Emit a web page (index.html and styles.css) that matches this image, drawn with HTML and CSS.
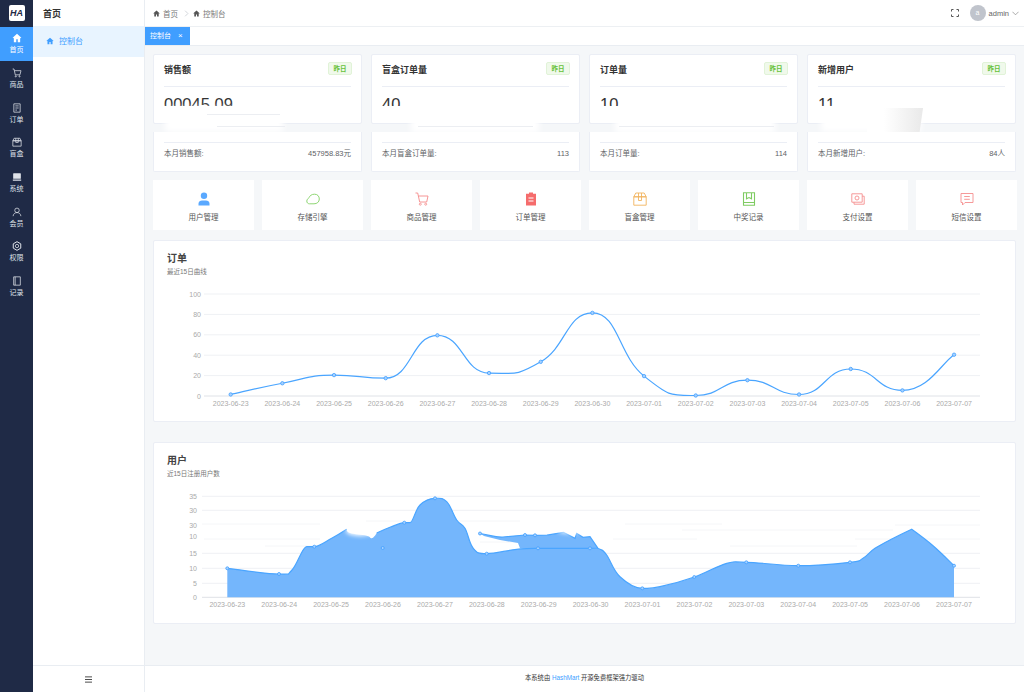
FILE: index.html
```html
<!DOCTYPE html>
<html lang="zh">
<head>
	<meta charset="utf-8">
	<title>控制台</title>
	<link rel="stylesheet" href="styles.css">
</head>
<body>
	<aside class="rail">
		<div class="logo"><span class="logoMark">HA</span></div>
		<a class="railItem active">
			<svg class="railIcon" viewBox="0 0 12 12"><path fill="currentColor" d="M6 1 .8 5.6l.7.7.7-.6V11h2.900V7.600h1.800V11h2.900V5.700l.7.6.7-.7z"/></svg>
			<span>首页</span>
		</a>
		<a class="railItem">
			<svg class="railIcon" viewBox="0 0 12 12"><path class="line" d="M.8 1.200h1.600l1.500 7h5.600L10.800 3.200H2.900"/><circle class="line" cx="4.500" cy="10" r=".7"/><circle class="line" cx="9" cy="10" r=".7"/></svg>
			<span>商品</span>
		</a>
		<a class="railItem">
			<svg class="railIcon" viewBox="0 0 12 12"><path class="line" d="M2.200 1h7.600v10H2.200zM4 3.500h4M4 6h4M4 8.500h2"/></svg>
			<span>订单</span>
		</a>
		<a class="railItem">
			<svg class="railIcon" viewBox="0 0 12 12"><path class="line" d="M1 4.500h10V11H1zM2.500 1.500h7L11 4.500H1zM4.500 1.500v5h3v-5"/></svg>
			<span>盲盒</span>
		</a>
		<a class="railItem">
			<svg class="railIcon" viewBox="0 0 12 12"><path fill="currentColor" d="M2 1.500h8a.6.6 0 0 1 .6.6V8H1.400V2.100a.6.6 0 0 1 .6-.6zM1 9h10v1.500H1z"/></svg>
			<span>系统</span>
		</a>
		<a class="railItem">
			<svg class="railIcon" viewBox="0 0 12 12"><circle class="line" cx="6" cy="4" r="2.700"/><path class="line" d="M1.300 11c.3-2.700 2.200-4.300 4.700-4.300s4.400 1.600 4.700 4.300"/></svg>
			<span>会员</span>
		</a>
		<a class="railItem">
			<svg class="railIcon" viewBox="0 0 12 12"><path class="line round" d="M6 .8 10.500 3.400v5.200L6 11.200 1.500 8.600V3.400z"/><circle class="line" cx="6" cy="6" r="2"/></svg>
			<span>权限</span>
		</a>
		<a class="railItem">
			<svg class="railIcon" viewBox="0 0 12 12"><path class="line" d="M2 1h8v10H2zM3.800 1v10"/></svg>
			<span>记录</span>
		</a>
	</aside>

	<nav class="subMenu">
		<div class="subTitle">首页</div>
		<a class="subItem">
			<svg class="subIcon" viewBox="0 0 12 12"><path fill="currentColor" d="M6 1 .8 5.600l.7.700.7-.6V11h2.900V7.600h1.800V11h2.900V5.700l.7.600.7-.7z"/></svg>
			控制台
		</a>
		<div class="subFooter">
			<svg class="menuIcon" viewBox="0 0 8 7"><path d="M0 .5h8M0 3.500h8M0 6.500h8" stroke="#333" fill="none"/></svg>
		</div>
	</nav>

	<div class="main">
		<header class="topBar">
			<div class="crumbs">
				<svg class="crumbIcon" viewBox="0 0 12 12"><path fill="currentColor" d="M6 1 .8 5.600l.7.700.7-.6V11h2.900V7.600h1.800V11h2.900V5.700l.7.600.7-.7z"/></svg>
				<span>首页</span>
				<svg class="crumbSep" viewBox="0 0 6 10"><path d="M1 1l4 4-4 4" fill="none" stroke="#c0c4cc" stroke-width="1"/></svg>
				<svg class="crumbIcon" viewBox="0 0 12 12"><path fill="currentColor" d="M6 1 .8 5.600l.7.700.7-.6V11h2.900V7.600h1.800V11h2.900V5.700l.7.600.7-.7z"/></svg>
				<span>控制台</span>
			</div>
			<div class="userBox">
				<svg class="fullIcon" viewBox="0 0 8 8"><path d="M.5 2.500v-2h2M5.500.5h2v2M7.500 5.500v2h-2M2.500 7.500h-2v-2" fill="none" stroke="#555" stroke-width="1"/></svg>
				<span class="avatar">a</span>
				<span class="userName">admin</span>
				<svg class="chevron" viewBox="0 0 8 5"><path d="M.5.5 4 4 7.500.5" fill="none" stroke="#888" stroke-width=".8"/></svg>
			</div>
		</header>

		<div class="tabBar">
			<div class="tab">控制台<span class="tabClose">×</span></div>
		</div>

		<div class="content">
			<section class="statGrid">
				<div class="stat">
					<div class="statTop">
						<div class="statHead"><h3>销售额</h3><span class="tag">昨日</span></div>
						<div class="statNum">00045.09</div>
					</div>
					<div class="statBottom"><div class="statRow"><span>本月销售额:</span><span>457958.83元</span></div></div>
					<div class="numCover"></div>
					<div class="smear smearA"></div>
					<div class="streak streakA"></div>
					<div class="streak streakA2"></div>
				</div>
				<div class="stat">
					<div class="statTop">
						<div class="statHead"><h3>盲盒订单量</h3><span class="tag">昨日</span></div>
						<div class="statNum">40</div>
					</div>
					<div class="statBottom"><div class="statRow"><span>本月盲盒订单量:</span><span>113</span></div></div>
					<div class="numCover"></div>
					<div class="smear smearB"></div>
					<div class="streak streakB"></div>
				</div>
				<div class="stat">
					<div class="statTop">
						<div class="statHead"><h3>订单量</h3><span class="tag">昨日</span></div>
						<div class="statNum">10</div>
					</div>
					<div class="statBottom"><div class="statRow"><span>本月订单量:</span><span>114</span></div></div>
					<div class="numCover"></div>
					<div class="smear smearC"></div>
					<div class="streak streakC"></div>
				</div>
				<div class="stat">
					<div class="statTop">
						<div class="statHead"><h3>新增用户</h3><span class="tag">昨日</span></div>
						<div class="statNum">11</div>
					</div>
					<div class="statBottom"><div class="statRow"><span>本月新增用户:</span><span>84人</span></div></div>
					<div class="numCover"></div>
					<div class="smear smearD"></div>
					<div class="sheen"></div>
				</div>
			</section>

			<section class="quickGrid">
				<a class="quick">
					<svg viewBox="0 0 14 14"><circle cx="7" cy="3.800" r="3.200" fill="#5aa9ff"/><path fill="#5aa9ff" d="M1.500 13.500v-1.700C1.500 9.600 3.200 8.500 5 8.500h4c1.800 0 3.500 1.100 3.500 3.300v1.700z"/></svg>
					<span>用户管理</span>
				</a>
				<a class="quick">
					<svg viewBox="0 0 14 14"><path fill="none" stroke="#82d164" stroke-width=".9" d="M.8 9C.8 7.300 2.300 6.800 3 5.500 3.800 3.800 5.600 2.200 8.500 2.200 11.500 2.200 13.300 4.200 13.300 7 13.300 10 11 11.800 8 11.800H3.500C1.900 11.800.8 10.700.8 9z"/></svg>
					<span>存储引擎</span>
				</a>
				<a class="quick">
					<svg viewBox="0 0 14 14"><path fill="none" stroke="#f58a8a" stroke-width=".9" d="M.5 1h2.200l2 9h7L13 4H3.500"/><circle cx="5.300" cy="12.200" r="1" fill="none" stroke="#f58a8a" stroke-width=".8"/><circle cx="10.700" cy="12.200" r="1" fill="none" stroke="#f58a8a" stroke-width=".8"/></svg>
					<span>商品管理</span>
				</a>
				<a class="quick">
					<svg viewBox="0 0 14 14"><path fill="#f56c6c" d="M5 .5h4v1.300h3v11.700H2V1.800h3z"/><path stroke="#fff" stroke-width="1" d="M4.500 6h5M4.500 9h5"/></svg>
					<span>订单管理</span>
				</a>
				<a class="quick">
					<svg viewBox="0 0 14 14"><path fill="none" stroke="#f2b45f" stroke-width=".9" d="M.8 4.800h12.400v8.400H.8zM2.800 1h8.400l2 3.800H.8zM5.500 1v7.500h3V1"/></svg>
					<span>盲盒管理</span>
				</a>
				<a class="quick">
					<svg viewBox="0 0 14 14"><path fill="none" stroke="#7fcb62" stroke-width="1.100" d="M1.500.8h11v12.400h-11zM1.500 10.500h11M4.500.8v6L7 5.500l2.500 1.300v-6"/></svg>
					<span>中奖记录</span>
				</a>
				<a class="quick">
					<svg viewBox="0 0 14 14"><path fill="none" stroke="#f58f8f" stroke-width=".9" d="M.8 1.800h10.400v8.400H.8zM11.200 4.200h2v8H3v-2"/><circle cx="6" cy="6" r="2" fill="none" stroke="#f58f8f" stroke-width=".9"/></svg>
					<span>支付设置</span>
				</a>
				<a class="quick">
					<svg viewBox="0 0 14 14"><path fill="none" stroke="#f58f8f" stroke-width=".9" d="M1 1.500h12v9H5L2.500 13v-2.500H1zM4.200 4.500h5.600M4.200 7.300h5.600"/></svg>
					<span>短信设置</span>
				</a>
			</section>

			<section class="chartCard">
				<div class="chartHead"><h3>订单</h3><p>最近15日曲线</p></div>
				<svg id="orderChart" class="chart" width="861" height="130" viewBox="154 285 861 130"></svg>
			</section>

			<section class="chartCard second">
				<div class="chartHead"><h3>用户</h3><p>近15日注册用户数</p></div>
				<svg id="userChart" class="chart" width="861" height="130" viewBox="154 487 861 130"></svg>
			</section>
		</div>

		<footer class="pageFooter">本系统由 <a class="footLink">HashMart</a> 开源免费框架强力驱动</footer>
	</div>

	<script src="charts.js"></script>
</body>
</html>
```

FILE: styles.css
```css
* {margin:0; padding:0; box-sizing:border-box;}
html, body {height:100%; overflow:hidden;}
body {display:flex; font-family:"Liberation Sans", "Noto Sans CJK SC", sans-serif; font-size:8px; color:#606266; background:#fff;}
a {color:inherit; text-decoration:none;}

/* left rail */
.rail {flex:0 0 33px; background:#1f2a46; color:#dfe3ea;}
.logo {height:26.500px; display:flex; align-items:center; justify-content:center;}
.logoMark {width:16px; height:16px; border-radius:2px; background:#fff; color:#1f2a46; font-size:9px; line-height:16px; font-weight:bold; font-style:italic; text-align:center;}
.railItem {height:34.700px; display:flex; flex-direction:column; align-items:center; justify-content:center; gap:3px; font-size:7px; line-height:8px;}
.railItem.active {background:#409eff; color:#fff;}
.railIcon {width:10px; height:10px;}
.railIcon .line {fill:none; stroke:currentColor; stroke-width:.9;}
.railIcon .round {stroke-linejoin:round; stroke-width:1.200;}

/* second menu */
.subMenu {flex:0 0 112px; display:flex; flex-direction:column; border-right:1px solid #e9edf2;}
.subTitle {height:26px; padding-left:10px; line-height:28px; font-size:9px; font-weight:bold; color:#333;}
.subItem {height:31px; display:flex; align-items:center; gap:5px; padding:0 0 2px 13px; background:#e8f4ff; color:#409eff; font-size:8px;}
.subIcon {width:8px; height:8px;}
.subFooter {margin-top:auto; height:27px; display:flex; align-items:center; justify-content:center; border-top:1px solid #e9edf2;}
.menuIcon {width:7px; height:7px;}

/* main column */
.main {flex:1; min-width:0; display:flex; flex-direction:column;}
.topBar {flex:0 0 27px; display:flex; align-items:center; justify-content:space-between; padding:0 5px 0 8px; border-bottom:1px solid #edf0f3;}
.crumbs {display:flex; align-items:center; gap:3px; font-size:7.500px; color:#777;}
.crumbIcon {width:7px; height:7px; color:#555;}
.crumbSep {width:5px; height:7px; margin:0 1px 0 3px;}
.userBox {display:flex; align-items:center;}
.fullIcon {width:8px; height:8px; margin-right:11px;}
.avatar {width:16px; height:16px; border-radius:50%; background:#c0c4cc; color:#fff; font-size:7px; line-height:16px; text-align:center; margin-right:3px;}
.userName {font-size:7.500px; color:#666; margin-right:3px;}
.chevron {width:7px; height:5px;}

.tabBar {flex:0 0 18px; display:flex; background:#fff; border-bottom:1px solid #e9edf2;}
.tab {width:45px; height:18px; padding-left:5px; background:#409eff; color:#fff; font-size:7px; line-height:18px;}
.tabClose {margin-left:7px; font-size:8px;}

.content {flex:1; min-height:0; overflow:hidden; padding:8px 8px 0; background:#f5f7f9;}

/* stat cards */
.statGrid {display:grid; grid-template-columns:repeat(4, 209px); gap:9px;}
.stat {position:relative; display:flex; flex-direction:column; gap:8px;}
.statTop {height:70px; background:#fff; border:1px solid #ebeef5; border-radius:2px; padding:0 10px;}
.statHead {height:32px; display:flex; align-items:center; justify-content:space-between; border-bottom:1px solid #ebeef5;}
.statHead h3 {font-size:9px; color:#333; margin-top:-3px;}
.tag {width:24px; height:13px; border:1px solid #e1f3d8; border-radius:2px; background:#f0f9eb; color:#67c23a; font-size:6.500px; line-height:11px; text-align:center; font-weight:bold; margin-top:-5px; margin-right:-1px;}
.statNum {margin-top:8px; font-size:16.500px; line-height:18px; color:#333;}
.statBottom {height:40px; background:#fff; border:1px solid #ebeef5; border-top:none; border-radius:0 0 2px 2px; padding:10px 10px 0;}
.statRow {display:flex; justify-content:space-between; border-top:1px solid #ebeef5; padding-top:6px; font-size:7.500px; line-height:10px; color:#606266;}

/* paint leftovers lying over the cards */
.numCover {position:absolute; left:8px; top:52px; width:100px; height:14px; background:#fff;}
.smear {position:absolute; background:#fff; filter:blur(3px);}
.smearA {left:12px; top:54px; width:118px; height:24px;}
.smearB {left:40px; top:60px; width:128px; height:19px;}
.smearC {left:26px; top:60px; width:160px; height:19px;}
.smearD {left:14px; top:56px; width:100px; height:22px;}
.streak {position:absolute; height:1px; background:#eceef2;}
.streakA {left:64px; top:72px; width:68px;}
.streakA2 {left:54px; top:60px; width:73px;}
.streakB {left:47px; top:72px; width:115px;}
.streakC {left:30px; top:72px; width:155px;}
.sheen {position:absolute; left:60px; top:54px; width:56px; height:24px; background:linear-gradient(90deg, #fff 30%, #e9e9e9); clip-path:polygon(0 0, 100% 0, 94% 100%, 0 100%);}

/* shortcut row */
.quickGrid {display:grid; grid-template-columns:repeat(8, 101px); gap:8px; margin-top:8px;}
.quick {height:50px; background:#fff; display:flex; flex-direction:column; align-items:center; padding-top:12px; gap:7px; font-size:7.500px; line-height:9px; color:#555;}
.quick svg {width:14px; height:14px;}

/* charts */
.chartCard {height:182px; margin-top:10px; width:863px; background:#fff; border:1px solid #ebeef5; border-radius:2px;}
.chartCard.second {margin-top:20px;}
.chartHead {height:44px; padding:11px 13px 0;}
.chartHead h3 {font-size:10px; line-height:13px; color:#444;}
.chartHead p {font-size:6.500px; line-height:10px; color:#777; margin-top:2px;}
.chart {display:block;}
.gridLine {stroke:#eff1f4; stroke-width:1;}
.gridFaint {stroke:#f5f6f8; stroke-width:1;}
.axisLine {stroke:#dfe2e7; stroke-width:1;}
.axisText {font-size:7px; fill:#aaa; font-family:"Liberation Sans", sans-serif;}
.curve {fill:none; stroke:#4aa5ff; stroke-width:1.200;}
.area {fill:#74b6fc;}
.dot {fill:#a6d1ff; stroke:#409eff; stroke-width:.8;}
.patch {fill:#fff; filter:blur(2px);}

.pageFooter {flex:0 0 27px; background:#fff; border-top:1px solid #e9edf2; text-align:center; font-size:6.300px; line-height:23px; color:#333;}
.footLink {color:#409eff;}
```

FILE: charts.js
```js
var NS = "http://www.w3.org/2000/svg";

function add(svg, tag, attrs, text){
	var el = document.createElementNS(NS, tag);
	for (var k in attrs) {
		el.setAttribute(k, attrs[k]);
	}
	if(text !== undefined){
		el.textContent = text;
	}
	svg.appendChild(el);
	return el;
}

// smooth line through the points, flat at local peaks; a third value on a point keeps it sharp
function smooth(pts, tension){
	var d = "M" + pts[0][0] + " " + pts[0][1];
	function tan(i){
		var a = pts[Math.max(i - 1, 0)], b = pts[i], c = pts[Math.min(i + 1, pts.length - 1)];
		if(b[2]){
			return [0, 0];
		}
		var dy = (c[1] - a[1]) * tension;
		if((b[1] - a[1]) * (c[1] - b[1]) <= 0 && i > 0 && i < pts.length - 1){
			dy = 0;
		}
		return [(c[0] - a[0]) * tension, dy];
	}
	for (var i = 0; i < pts.length - 1; i++) {
		var t0 = tan(i), t1 = tan(i + 1);
		d += " C" + (pts[i][0] + t0[0]) + " " + (pts[i][1] + t0[1]) + " " +
			(pts[i + 1][0] - t1[0]) + " " + (pts[i + 1][1] - t1[1]) + " " +
			pts[i + 1][0] + " " + pts[i + 1][1];
	}
	return d;
}

var dates = ["06-23","06-24","06-25","06-26","06-27","06-28","06-29","06-30","07-01","07-02","07-03","07-04","07-05","07-06","07-07"];

function xLabels(svg, x0, step, y){
	for (var i = 0; i < dates.length; i++) {
		add(svg, "text", {x: x0 + step * i, y: y, "text-anchor": "middle", "class": "axisText"}, "2023-" + dates[i]);
	}
}

/* orders chart */
var order = document.getElementById("orderChart");
var orderVals = [1,12,20,17,59,22,33,81,19,0,15,1,26,5,40];
[100,80,60,40,20,0].forEach(function(v){
	var y = 396 - v * 1.02;
	add(order, "line", {x1: 204, x2: 980, y1: y, y2: y, "class": v ? "gridLine" : "axisLine"});
	add(order, "text", {x: 201, y: y + 2.5, "text-anchor": "end", "class": "axisText"}, v);
});
xLabels(order, 230.7, 51.67, 405.5);
var orderPts = orderVals.map(function(v, i){
	return [230.7 + 51.67 * i, 395.5 - v * 1.02];
});
add(order, "path", {d: smooth(orderPts, 0.25), "class": "curve"});
orderPts.forEach(function(p){
	add(order, "circle", {cx: p[0], cy: p[1], r: 1.7, "class": "dot"});
});

/* users chart: gridlines 3 and 4 only survive in pieces */
var user = document.getElementById("userChart");
[[35,496.3],[30,510.3],[15,553.3],[10,568.3],[5,583.3]].forEach(function(g){
	add(user, "line", {x1: 202, x2: 980, y1: g[1], y2: g[1], "class": "gridLine"});
	add(user, "text", {x: 197, y: g[1] + 2.5, "text-anchor": "end", "class": "axisText"}, g[0]);
});
add(user, "text", {x: 197, y: 527.5, "text-anchor": "end", "class": "axisText"}, 30);
add(user, "text", {x: 197, y: 538.5, "text-anchor": "end", "class": "axisText"}, 10);
add(user, "text", {x: 197, y: 599.8, "text-anchor": "end", "class": "axisText"}, 0);
[[202,320,524],[366,520,521],[625,722,524],[682,893,530],[895,980,525],[204,320,539],[265,380,546],[480,520,542],[613,697,539],[855,980,539],[730,857,546]].forEach(function(s){
	add(user, "line", {x1: s[0], x2: s[1], y1: s[2], y2: s[2], "class": "gridFaint"});
});
add(user, "line", {x1: 202, x2: 980, y1: 597.3, y2: 597.3, "class": "axisLine"});
xLabels(user, 227.3, 51.9, 607);

var leftPart = [[227.3,568.3],[279,574],[292,570],[306.7,546.7],[314.3,546.7],[331.7,538.3],[346.7,529.3,1]];
var wiped = [[350,533],[366.7,535.7],[371.7,538.3]];
var rightPart = [[376.7,533,1],[390,527.3],[404.3,522.7],[410,522.7],[420,505],[435,498.3],[446.7,501.7],[456.7,520],[465,528.3],[473.3,548.3],[486.7,553.7],[516.7,549.3],[538,548.3],[590,548.3],[600,549.3],[606.7,555],[620,576.7],[642.3,588.3],[660,586.7],[694.3,577],[726.7,563.3],[746.3,562.3],[798.3,565.7],[850,562.3],[863,558.3],[875,548.3],[893.3,538.3],[911.7,529.3,1],[933.3,546],[954,565.7]];
var outline = leftPart.concat(wiped, rightPart);
add(user, "path", {d: smooth(outline, 0.2) + " L954 597.3 L227.3 597.3 Z", "class": "area"});

var blobTop = "M480 533.5 C490 535 495 537.5 503 537 L525 535 L535 535.3 L547 535.2 L563.5 532.3 L575 538.3 L576.7 533.3 L583 537.3 L590 536.7 L598 548.3";
add(user, "path", {d: blobTop + " L520 548.3 L518 543 L500 540 L484 536 Z", "class": "area"});
add(user, "path", {d: blobTop, "class": "curve"});
add(user, "path", {d: smooth(leftPart, 0.2), "class": "curve"});
add(user, "path", {d: smooth(rightPart, 0.2), "class": "curve"});

// soft white patches where the area was wiped
add(user, "ellipse", {cx: 360, cy: 531, rx: 14, ry: 5, "class": "patch"});
add(user, "ellipse", {cx: 570, cy: 531, rx: 12, ry: 2.5, "class": "patch"});

[[227.3,568.3],[279,574],[314.3,546.7],[382.7,548],[404.3,522.7],[435,498.3],[480,533.5],[486.7,553.7],[525,535],[535,535.3],[538,548.3],[590,548.3],[642.3,588.3],[694.3,577],[746.3,562.3],[798.3,565.7],[850,562.3],[954,565.7]].forEach(function(p){
	add(user, "circle", {cx: p[0], cy: p[1], r: 1.5, "class": "dot"});
});
```
